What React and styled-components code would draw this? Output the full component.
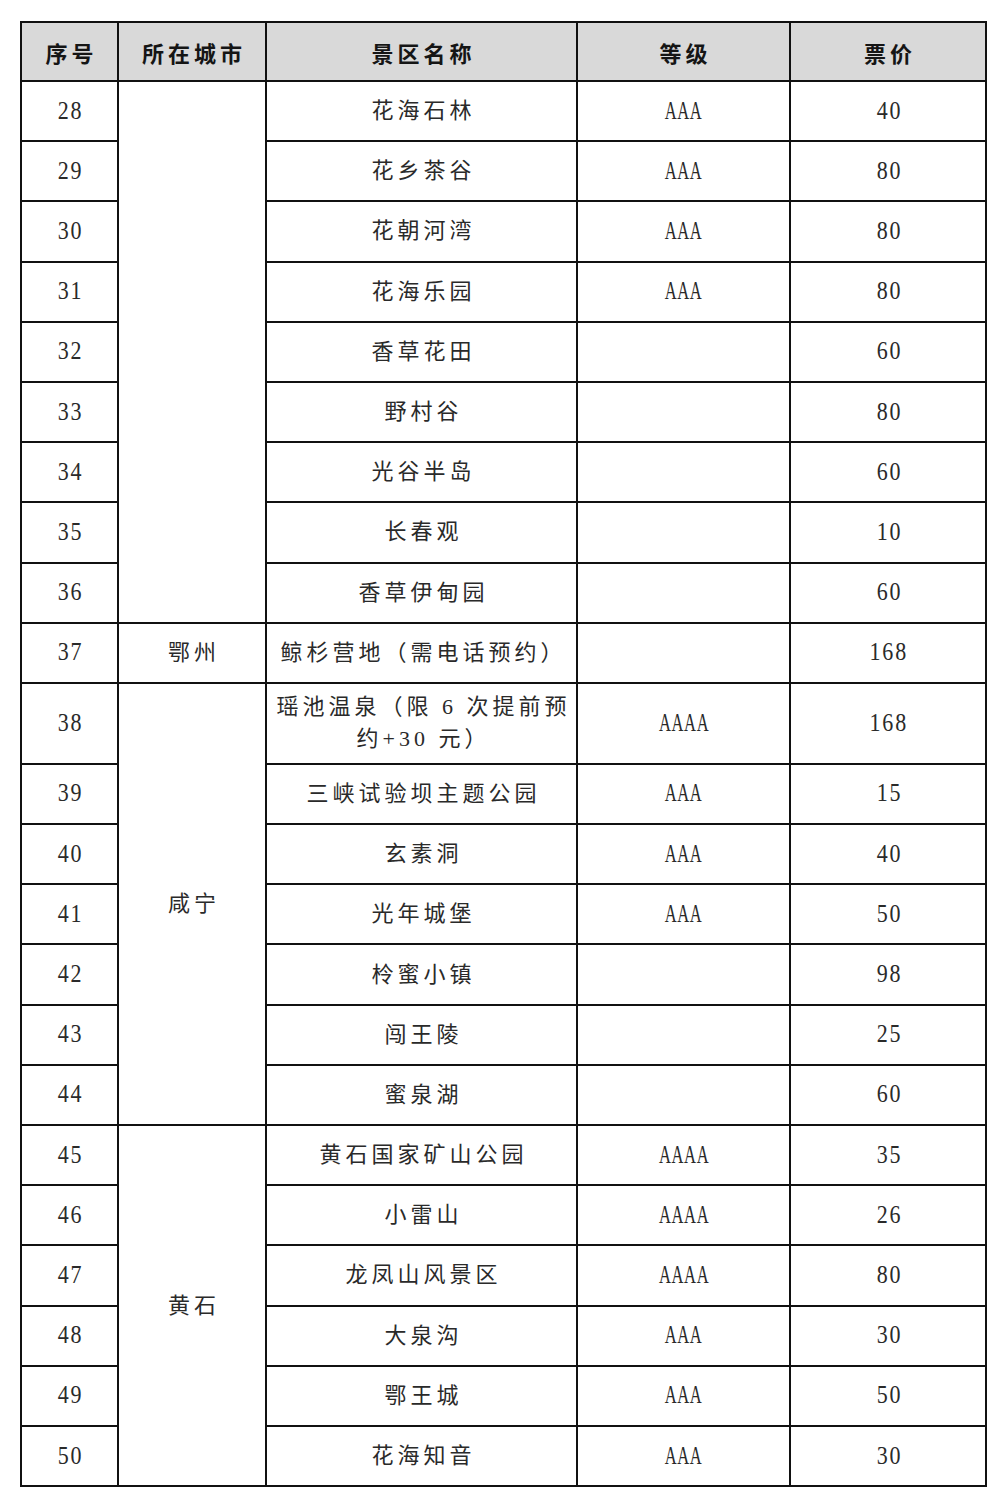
import React from "react";
import styled, { createGlobalStyle } from "styled-components";

const GlobalStyle = createGlobalStyle`
  html, body {
    margin: 0;
    padding: 0;
    background: #fff;
  }
  body {
    font-family: "Liberation Serif", "Noto Sans CJK SC", serif;
    color: #222;
  }
`;

const Page = styled.div`
  width: 1001px;
  height: 1504px;
  padding: 21px 0 0 20px;
  box-sizing: border-box;
  background: #fff;
`;

const Table = styled.table`
  width: 965px;
  border-collapse: collapse;
  table-layout: fixed;
  border: 2px solid #111;
`;

const Col = styled.col`
  width: ${(p) => p.$w}px;
`;

const Head = styled.th`
  height: 57px;
  padding: 0 0 0 4px;
  background: #d9d9d9;
  border: 2px solid #111;
  font-family: "Noto Sans CJK SC", sans-serif;
  font-size: 22px;
  font-weight: 700;
  letter-spacing: 4px;
  color: #151515;
  text-align: center;
  vertical-align: middle;
`;

const Row = styled.tr`
  height: ${(p) => (p.$tall ? 81 : 60.2)}px;
`;

const Cell = styled.td`
  padding: 0 0 0 ${(p) => (p.$text ? 4 : 0)}px;
  border: 2px solid #111;
  text-align: center;
  vertical-align: middle;
  font-size: 22px;
  letter-spacing: 4px;
  line-height: 32px;
  color: #2a2a2a;
  white-space: nowrap;
`;

const Num = styled.span`
  display: inline-block;
  font-family: "Liberation Serif", serif;
  font-size: 25px;
  letter-spacing: 2px;
  margin-right: -2px;
  transform: scaleX(0.88);
`;

const Grade = styled.span`
  display: inline-block;
  font-family: "Liberation Serif", serif;
  font-size: 25px;
  letter-spacing: 1px;
  margin-right: -1px;
  transform: scaleX(0.66);
`;

const rows = [
  { no: 28, city: "", span: 9, name: "花海石林", grade: "AAA", price: "40" },
  { no: 29, name: "花乡茶谷", grade: "AAA", price: "80" },
  { no: 30, name: "花朝河湾", grade: "AAA", price: "80" },
  { no: 31, name: "花海乐园", grade: "AAA", price: "80" },
  { no: 32, name: "香草花田", grade: "", price: "60" },
  { no: 33, name: "野村谷", grade: "", price: "80" },
  { no: 34, name: "光谷半岛", grade: "", price: "60" },
  { no: 35, name: "长春观", grade: "", price: "10" },
  { no: 36, name: "香草伊甸园", grade: "", price: "60" },
  { no: 37, city: "鄂州", span: 1, name: "鲸杉营地（需电话预约）", grade: "", price: "168" },
  {
    no: 38,
    city: "咸宁",
    span: 7,
    name: ["瑶池温泉（限 6 次提前预", "约+30 元）"],
    grade: "AAAA",
    price: "168",
    tall: true,
  },
  { no: 39, name: "三峡试验坝主题公园", grade: "AAA", price: "15" },
  { no: 40, name: "玄素洞", grade: "AAA", price: "40" },
  { no: 41, name: "光年城堡", grade: "AAA", price: "50" },
  { no: 42, name: "柃蜜小镇", grade: "", price: "98" },
  { no: 43, name: "闯王陵", grade: "", price: "25" },
  { no: 44, name: "蜜泉湖", grade: "", price: "60" },
  { no: 45, city: "黄石", span: 6, name: "黄石国家矿山公园", grade: "AAAA", price: "35" },
  { no: 46, name: "小雷山", grade: "AAAA", price: "26" },
  { no: 47, name: "龙凤山风景区", grade: "AAAA", price: "80" },
  { no: 48, name: "大泉沟", grade: "AAA", price: "30" },
  { no: 49, name: "鄂王城", grade: "AAA", price: "50" },
  { no: 50, name: "花海知音", grade: "AAA", price: "30" },
];

export default function App() {
  return (
    <Page>
      <GlobalStyle />
      <Table>
        <colgroup>
          <Col $w={97} />
          <Col $w={148} />
          <Col $w={311} />
          <Col $w={213} />
          <Col $w={196} />
        </colgroup>
        <thead>
          <tr>
            <Head>序号</Head>
            <Head>所在城市</Head>
            <Head>景区名称</Head>
            <Head>等级</Head>
            <Head>票价</Head>
          </tr>
        </thead>
        <tbody>
          {rows.map((r) => (
            <Row key={r.no} $tall={r.tall}>
              <Cell>
                <Num>{r.no}</Num>
              </Cell>
              {r.span && (
                <Cell $text rowSpan={r.span}>
                  {r.city}
                </Cell>
              )}
              <Cell $text>
                {Array.isArray(r.name)
                  ? r.name.map((line, i) => <div key={i}>{line}</div>)
                  : r.name}
              </Cell>
              <Cell>{r.grade && <Grade>{r.grade}</Grade>}</Cell>
              <Cell>
                <Num>{r.price}</Num>
              </Cell>
            </Row>
          ))}
        </tbody>
      </Table>
    </Page>
  );
}
